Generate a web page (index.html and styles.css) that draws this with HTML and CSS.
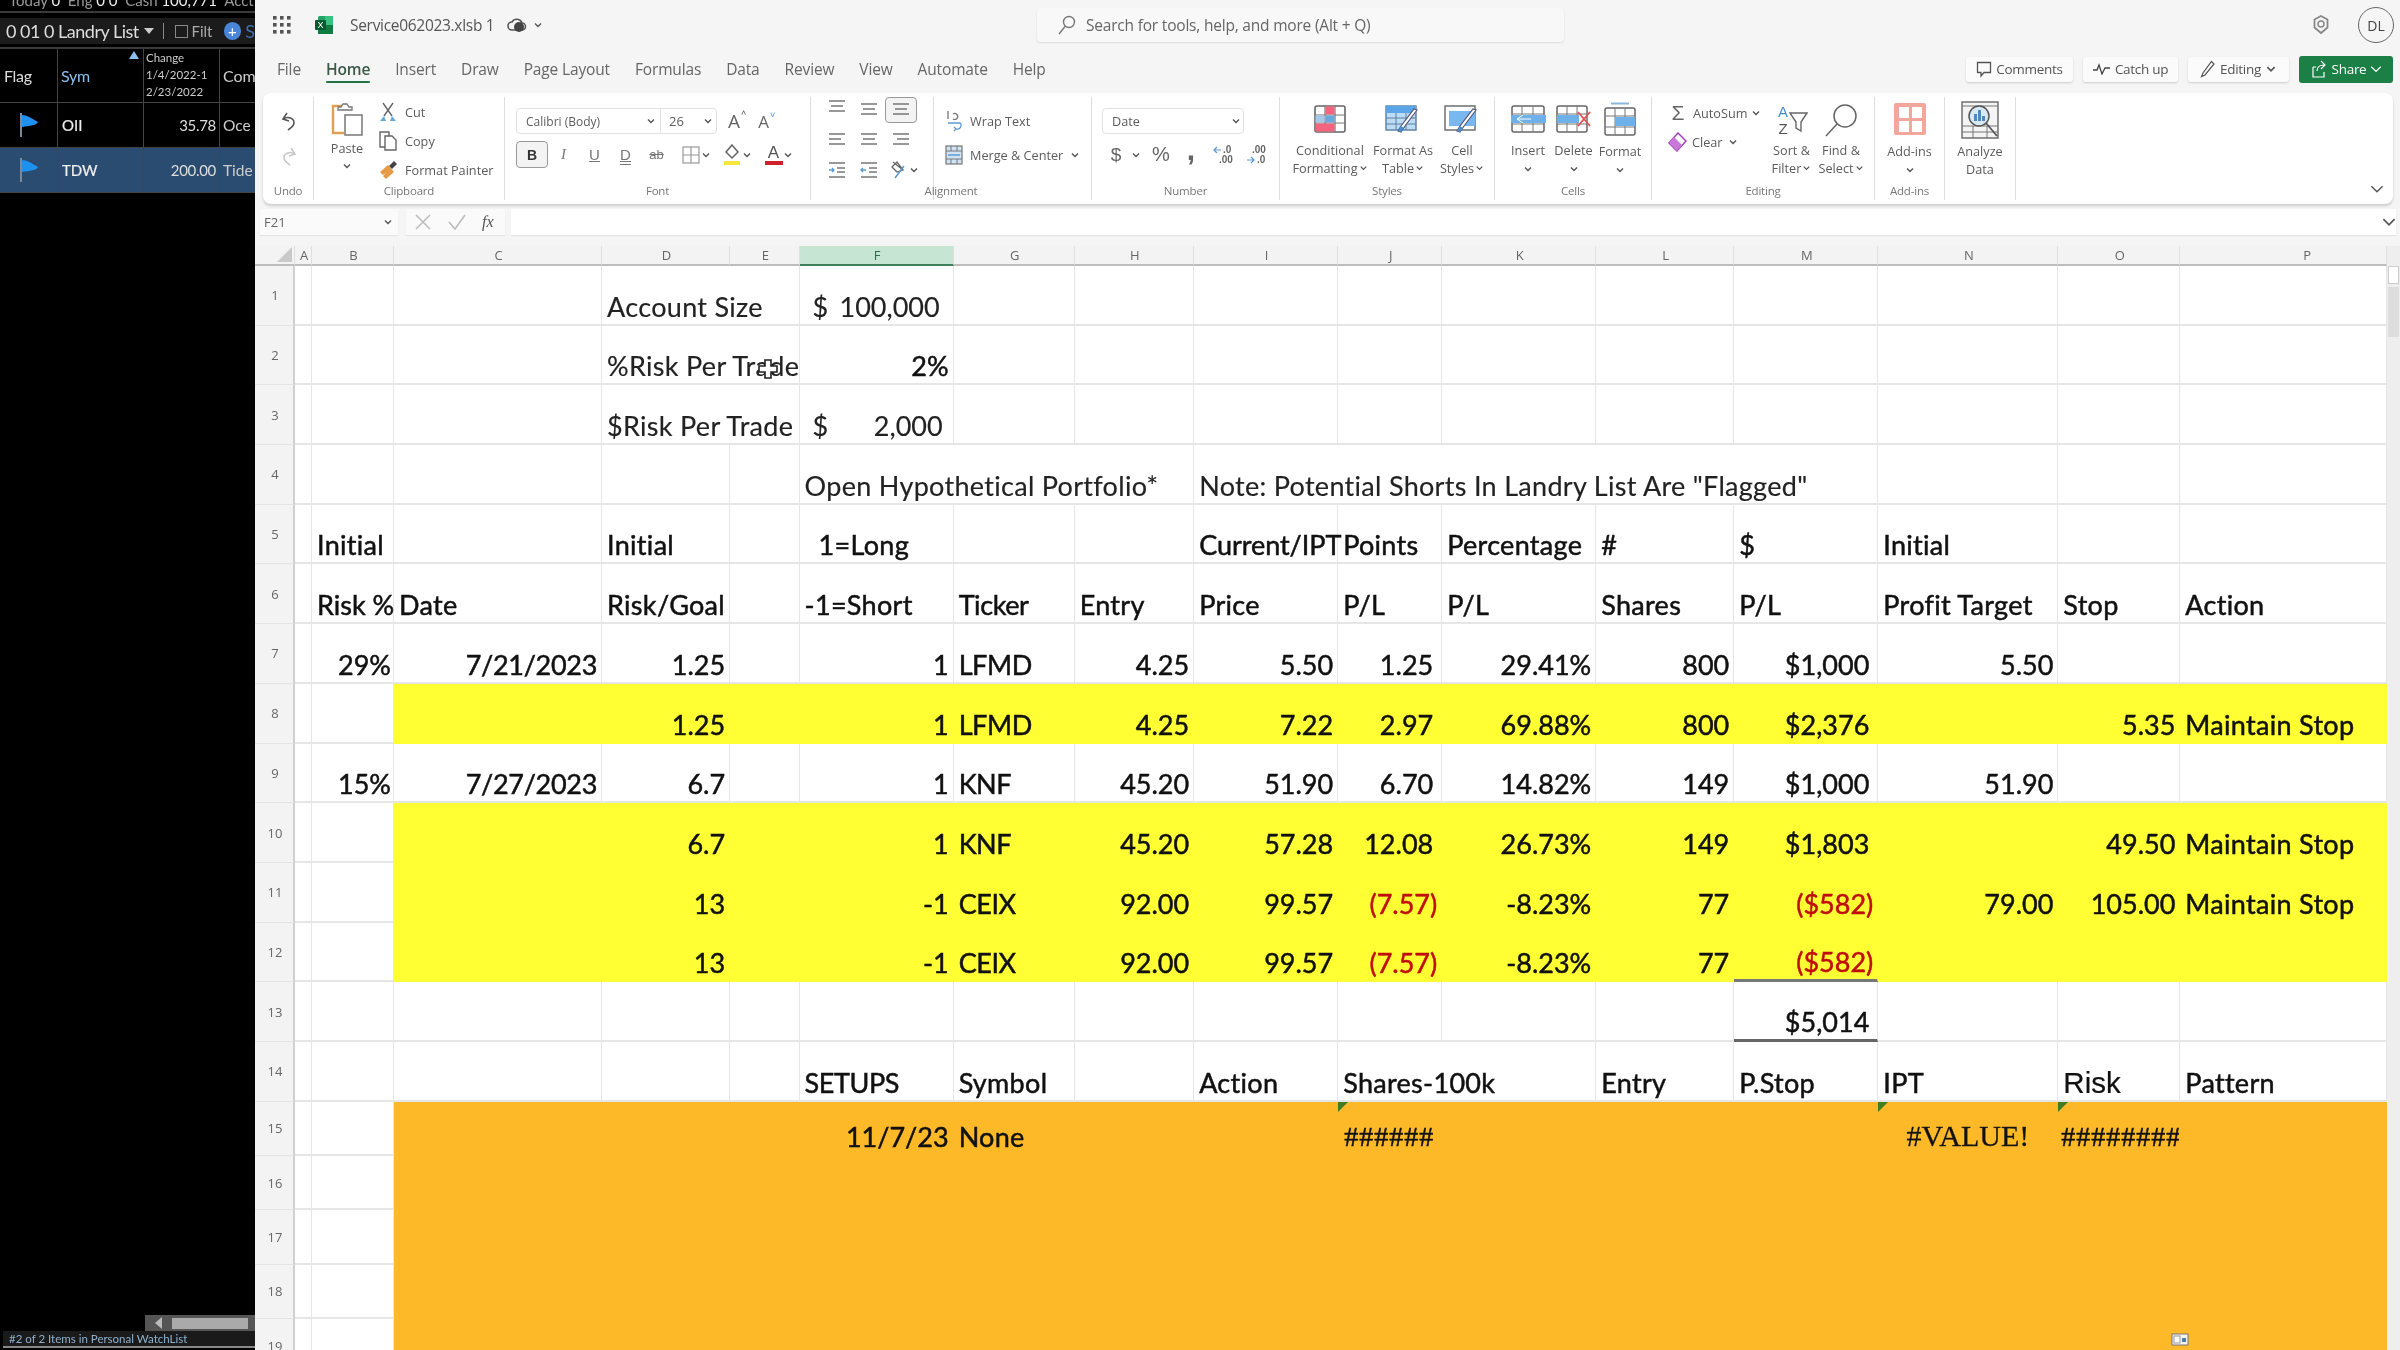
FILE: index.html
```html
<!DOCTYPE html>
<html lang="en">
<head>
<meta charset="utf-8">
<title>Service062023.xlsb</title>
<link rel="stylesheet" href="styles.css">
</head>
<body>
<svg class="defs" width="0" height="0">
  <symbol id="tbl" viewBox="0 0 32 28"><rect x="1" y="1" width="30" height="26" rx="2" fill="#fff" stroke="#666" stroke-width="1.6"/><path d="M1 10h30M1 18h30M11 1v26M21 1v26" stroke="#777" stroke-width="1.2" fill="none"/></symbol>
  <symbol id="chev" viewBox="0 0 10 10"><path d="M2 3.5 5 6.5 8 3.5" fill="none" stroke="#555" stroke-width="1.4"/></symbol>
  <symbol id="lines-l" viewBox="0 0 20 20"><path d="M2 4h16M2 9h12M2 14h16" stroke="#777" stroke-width="1.6"/></symbol>
  <symbol id="lines-c" viewBox="0 0 20 20"><path d="M2 4h16M4 9h12M2 14h16" stroke="#777" stroke-width="1.6"/></symbol>
  <symbol id="lines-r" viewBox="0 0 20 20"><path d="M2 4h16M6 9h12M2 14h16" stroke="#777" stroke-width="1.6"/></symbol>
</svg>
<div class="app">
  <aside class="watch">
    <div class="watch-strip"><span class="ws-in">Today <b>0</b> &nbsp;Eng <b>0 0</b> &nbsp;Cash <b>100,771</b> &nbsp;Acct</span></div>
    <div class="watch-tools">
      <span class="wt-name">0 01 0 Landry List</span><span class="wt-caret"></span><span class="wt-sep"></span><span class="wt-box"></span><span class="wt-filt">Filt</span><span class="wt-plus">+</span><span class="wt-s">S</span>
    </div>
    <div class="watch-grid wg-head">
      <div class="wc wc-flag">Flag</div>
      <div class="wc wc-sym">Sym<span class="wc-sort"></span></div>
      <div class="wc wc-chg">Change<br>1/4/2022-1<br>2/23/2022</div>
      <div class="wc wc-com">Com</div>
    </div>
    <div class="watch-grid wg-row">
      <div class="wc wc-ic"><svg width="20" height="26" viewBox="0 0 20 26"><path d="M2 1v24" stroke="#7a8a99" stroke-width="2"/><path d="M3 3c5 0 9 3 16 7-1 3-8 4-16 5z" fill="#1e90f0"/></svg></div>
      <div class="wc wc-t">OII</div><div class="wc wc-n">35.78</div><div class="wc wc-c">Oce</div>
    </div>
    <div class="watch-grid wg-row wg-sel">
      <div class="wc wc-ic"><svg width="20" height="26" viewBox="0 0 20 26"><path d="M2 1v24" stroke="#7a8a99" stroke-width="2"/><path d="M3 3c5 0 9 3 16 7-1 3-8 4-16 5z" fill="#1e90f0"/></svg></div>
      <div class="wc wc-t">TDW</div><div class="wc wc-n">200.00</div><div class="wc wc-c">Tide</div>
    </div>
    <div class="watch-fill"></div>
    <div class="watch-scroll"><span class="ws-arrow"></span><span class="ws-thumb"></span></div>
    <div class="watch-status">#2 of 2 Items in Personal WatchList</div>
    <div class="watch-end"></div>
  </aside>

  <main class="excel">
    <header class="titlebar">
      <svg class="waffle" width="18" height="18" viewBox="0 0 18 18" fill="#555"><rect x="0" y="0" width="3.6" height="3.6"/><rect x="7" y="0" width="3.6" height="3.6"/><rect x="14" y="0" width="3.6" height="3.6"/><rect x="0" y="7" width="3.6" height="3.6"/><rect x="7" y="7" width="3.6" height="3.6"/><rect x="14" y="7" width="3.6" height="3.6"/><rect x="0" y="14" width="3.6" height="3.6"/><rect x="7" y="14" width="3.6" height="3.6"/><rect x="14" y="14" width="3.6" height="3.6"/></svg>
      <svg class="xl" width="20" height="20" viewBox="0 0 20 20"><rect x="4" y="1" width="15" height="18" rx="1.5" fill="#21a366"/><rect x="4" y="10" width="15" height="9" fill="#107c41"/><rect x="11" y="1" width="8" height="9" fill="#33c481"/><rect x="1" y="5" width="11" height="10" rx="1" fill="#0b5a2f"/><text x="6.5" y="13" font-size="9" text-anchor="middle" fill="#fff" font-family="Liberation Sans">X</text></svg>
      <span class="doc">Service062023.xlsb 1</span>
      <svg class="cloud" width="20" height="18" viewBox="0 0 20 18"><path d="M5 14a4 4 0 0 1 0-8 5.500 5.500 0 0 1 10 1 3.500 3.500 0 0 1 0 7z" fill="none" stroke="#555" stroke-width="1.6"/><circle cx="12" cy="11" r="5" fill="#444"/></svg>
      <svg class="chev-doc" width="10" height="10"><use href="#chev"/></svg>
      <div class="search">
        <svg width="22" height="22" viewBox="0 0 22 22"><circle cx="13" cy="8" r="5.500" fill="none" stroke="#777" stroke-width="1.400"/><path d="M9 12.500 3 20" stroke="#777" stroke-width="1.400"/></svg>
        <span>Search for tools, help, and more (Alt + Q)</span>
      </div>
      <svg class="gear" width="20" height="22" viewBox="0 0 20 22"><path d="M10 2 16.500 5.500v8L10 19l-6.500-5.500v-8z" fill="none" stroke="#888" stroke-width="1.800"/><circle cx="10" cy="10" r="3" fill="none" stroke="#888" stroke-width="1.500"/></svg>
      <span class="avatar">DL</span>
    </header>

    <nav class="tabs">
      <span class="tab">File</span><span class="tab tab-on">Home</span><span class="tab">Insert</span><span class="tab">Draw</span><span class="tab">Page Layout</span><span class="tab">Formulas</span><span class="tab">Data</span><span class="tab">Review</span><span class="tab">View</span><span class="tab">Automate</span><span class="tab">Help</span>
      <div class="actions">
        <span class="act act-c"><svg width="16" height="17" viewBox="0 0 16 17"><path d="M1.500 1.500h13v10H8l-3 3.500v-3.500H1.500z" fill="none" stroke="#555" stroke-width="1.300"/></svg>Comments</span>
        <span class="act act-u"><svg width="18" height="12" viewBox="0 0 18 12"><path d="M0 7h4l2-5 3 9 3-6h5" fill="none" stroke="#444" stroke-width="1.300"/></svg>Catch up</span>
        <span class="act act-e"><svg width="16" height="18" viewBox="0 0 16 18"><path d="M11.500 1.500 14 4 5 15l-3.500 1.500L3 13z" fill="none" stroke="#555" stroke-width="1.200"/></svg>Editing<svg width="12" height="12"><use href="#chev"/></svg></span>
        <span class="act act-s"><svg width="18" height="20" viewBox="0 0 18 20"><path d="M3 8v10h11v-5M3 8h3M7 12c0-4 3-6 7-6M11 2l4 4-4 4" fill="none" stroke="#fff" stroke-width="1.200"/></svg>Share<svg class="w" width="12" height="12" viewBox="0 0 10 10"><path d="M1 3 5 7 9 3" fill="none" stroke="#fff" stroke-width="1.100"/></svg></span>
      </div>
    </nav>

    <section class="ribbon">
      <div class="grp g-undo">
        <div class="grp-body col-center">
          <svg class="undo" width="24" height="24" viewBox="0 0 24 24"><path d="M10 4 6 10l6 2M6 10c5-3 11-1 11 4 0 3-3 5-6 7" fill="none" stroke="#555" stroke-width="1.600"/></svg>
          <svg class="redo" width="24" height="24" viewBox="0 0 24 24"><path d="M14 4l4 6-6 2M18 10c-5-3-11-1-11 4 0 3 3 5 6 7" fill="none" stroke="#c8c8c8" stroke-width="1.600"/></svg>
        </div>
        <div class="grp-label">Undo</div>
      </div>

      <div class="grp g-clip">
        <div class="grp-body row">
          <div class="paste">
            <svg width="32" height="34" viewBox="0 0 32 34"><path d="M13 4H2v27h11" fill="none" stroke="#e0a050" stroke-width="2.400"/><path d="M7 8V5h3l2-3h4l2 3h3v3z" fill="#fff" stroke="#777" stroke-width="1.300"/><rect x="14" y="13" width="17" height="20" fill="#fff" stroke="#777" stroke-width="1.500"/></svg>
            <span class="pl">Paste</span>
            <svg class="pc" width="10" height="10"><use href="#chev"/></svg>
          </div>
          <div class="clip-list">
            <div class="clip-row"><svg width="20" height="22" viewBox="0 0 20 22"><path d="M5 2l9 13M15 2 6 15" stroke="#666" stroke-width="1.400" fill="none"/><path d="M2 20l4-5 2 5zM18 20l-4-5-2 5z" fill="#6aa8d8"/></svg><span>Cut</span></div>
            <div class="clip-row"><svg width="20" height="22" viewBox="0 0 20 22"><path d="M2 2h9v15H2z" fill="none" stroke="#666" stroke-width="1.400"/><path d="M7 6h7l4 4v10H7z" fill="#fff" stroke="#666" stroke-width="1.400"/></svg><span>Copy</span></div>
            <div class="clip-row"><svg width="20" height="22" viewBox="0 0 20 22"><path d="M2 13l8-7 6 7-8 7-3-3 3-3-3 2z" fill="#e59a45"/><path d="M11 7l5-5 3 3-5 5z" fill="#444"/></svg><span>Format Painter</span></div>
          </div>
        </div>
        <div class="grp-label">Clipboard</div>
      </div>

      <div class="grp g-font">
        <div class="grp-body col">
          <div class="font-row1">
            <div class="combo"><span class="c-name">Calibri (Body)<svg width="10" height="10"><use href="#chev"/></svg></span><span class="c-size">26<svg width="10" height="10"><use href="#chev"/></svg></span></div>
            <span class="grow">A<sup>˄</sup></span><span class="shrink">A<sup>˅</sup></span>
          </div>
          <div class="font-row2">
            <span class="fb fb-on">B</span><span class="fb fi">I</span><span class="fb fu">U</span><span class="fb fu fd">D</span><span class="fb fs">ab</span>
            <span class="fb fbd"><svg width="20" height="20" viewBox="0 0 20 20"><rect x="2" y="2" width="16" height="16" fill="none" stroke="#999" stroke-width="1.200"/><path d="M2 10h16M10 2v16" stroke="#999" stroke-width="1.200"/></svg><svg width="10" height="10"><use href="#chev"/></svg></span>
            <span class="fb ffill"><svg width="20" height="24" viewBox="0 0 20 24"><path d="M10 2l6 7-6 6-6-6z" fill="none" stroke="#666" stroke-width="1.500"/><rect x="2" y="18" width="16" height="4" fill="#f4e83c"/></svg><svg width="10" height="10"><use href="#chev"/></svg></span>
            <span class="fb fcol"><span class="fa">A</span><svg width="10" height="10"><use href="#chev"/></svg></span>
          </div>
        </div>
        <div class="grp-label">Font</div>
      </div>

      <div class="grp g-align">
        <div class="grp-body row">
          <div class="al-grid">
            <span class="al al-t"><svg width="20" height="20"><use href="#lines-c"/></svg></span>
            <span class="al"><svg width="20" height="20"><use href="#lines-c"/></svg></span>
            <span class="al al-on"><svg width="20" height="20"><use href="#lines-c"/></svg></span>
            <span class="al"><svg width="20" height="20"><use href="#lines-l"/></svg></span>
            <span class="al"><svg width="20" height="20"><use href="#lines-c"/></svg></span>
            <span class="al"><svg width="20" height="20"><use href="#lines-r"/></svg></span>
            <span class="al"><svg width="20" height="20" viewBox="0 0 20 20"><path d="M2 3h16M10 8h8M10 12h8M2 17h16" stroke="#777" stroke-width="1.500"/><path d="M2 10h5M5 8l2 2-2 2" stroke="#5a9ad5" fill="none" stroke-width="1.300"/></svg></span>
            <span class="al"><svg width="20" height="20" viewBox="0 0 20 20"><path d="M2 3h16M10 8h8M10 12h8M2 17h16" stroke="#777" stroke-width="1.500"/><path d="M7 10H2M4 8l-2 2 2 2" stroke="#5a9ad5" fill="none" stroke-width="1.300"/></svg></span>
            <span class="al al-orient"><svg width="20" height="22" viewBox="0 0 20 22"><path d="M4 3l10 8M3 8l5-5 6 8-6 2z" fill="none" stroke="#666" stroke-width="1.300"/><path d="M15 7 6 19" stroke="#5a9ad5" stroke-width="1.500"/></svg><svg width="10" height="10"><use href="#chev"/></svg></span>
          </div>
          <div class="merge-col">
            <div class="m-row"><svg width="18" height="24" viewBox="0 0 18 24"><path d="M3 2v8M8 5a3 3 0 1 1 0 5" fill="none" stroke="#777" stroke-width="1.300"/><path d="M3 14h11c4 0 2 7-3 6M9 18l2 2-2 2" fill="none" stroke="#5a9ad5" stroke-width="1.300"/></svg><span>Wrap Text</span></div>
            <div class="m-row"><svg width="18" height="20" viewBox="0 0 18 20"><rect x="1" y="1" width="16" height="18" fill="#cfe3f5" stroke="#777" stroke-width="1.200"/><path d="M1 6h16M1 14h16M6 1v5M12 1v5M6 14v5M12 14v5" stroke="#777"/><path d="M3 10h12" stroke="#4a90d0" stroke-width="1.300"/></svg><span>Merge &amp; Center</span><svg width="10" height="10"><use href="#chev"/></svg></div>
          </div>
        </div>
        <div class="grp-label">Alignment</div>
      </div>

      <div class="grp g-num">
        <div class="grp-body col">
          <div class="num-sel"><span>Date</span><svg width="10" height="10"><use href="#chev"/></svg></div>
          <div class="num-row">
            <span class="nb nb-d">$</span><svg class="nb-c" width="10" height="10"><use href="#chev"/></svg>
            <span class="nb nb-p">%</span><span class="nb nb-cm">,</span>
            <span class="nb nb-s"><svg width="24" height="24" viewBox="0 0 24 24"><path d="M9 7H2M5 4 2 7l3 3" fill="none" stroke="#5a9ad5" stroke-width="1.200"/><text x="11" y="10" font-size="10" font-weight="700" fill="#666" font-family="Liberation Sans">.0</text><text x="7" y="20" font-size="10" font-weight="700" fill="#666" font-family="Liberation Sans">.00</text></svg></span>
            <span class="nb nb-s"><svg width="24" height="24" viewBox="0 0 24 24"><text x="7" y="10" font-size="10" font-weight="700" fill="#666" font-family="Liberation Sans">.00</text><path d="M2 17h7M6 14l3 3-3 3" fill="none" stroke="#5a9ad5" stroke-width="1.200"/><text x="12" y="20" font-size="10" font-weight="700" fill="#666" font-family="Liberation Sans">.0</text></svg></span>
          </div>
        </div>
        <div class="grp-label">Number</div>
      </div>

      <div class="grp g-styles">
        <div class="grp-body row">
          <div class="big b-cond">
            <svg class="ico" width="32" height="28" viewBox="0 0 32 28"><use href="#tbl"/><rect x="11.500" y="1.500" width="9" height="8" fill="#f4647e"/><rect x="1.500" y="10.500" width="9" height="7" fill="#a8c8e8"/><rect x="11.500" y="10.500" width="9" height="7" fill="#6aa8e0"/><rect x="1.500" y="18.500" width="19" height="8" fill="#f4647e"/></svg>
            <span>Conditional</span><span>Formatting<svg width="9" height="10"><use href="#chev"/></svg></span>
          </div>
          <div class="big b-fmt">
            <svg class="ico" width="36" height="30" viewBox="0 0 36 30"><rect x="1" y="2" width="30" height="24" fill="#bcdcf5" stroke="#5a7fa0" stroke-width="1.400"/><rect x="1" y="2" width="30" height="7" fill="#5aa5e8"/><path d="M1 14h30M1 20h30M11 9v17M21 9v17" stroke="#5a7fa0"/><path d="M32 6 20 22l-4 6-3-1 3-5L29 5z" fill="#fff" stroke="#557" stroke-width="1.200"/><path d="M16 22l-3 5 3 1 3-4z" fill="#4a90d0"/></svg>
            <span>Format As</span><span>Table<svg width="9" height="10"><use href="#chev"/></svg></span>
          </div>
          <div class="big b-cell">
            <svg class="ico" width="36" height="30" viewBox="0 0 36 30"><rect x="1" y="2" width="30" height="24" fill="#fff" stroke="#666" stroke-width="1.400"/><rect x="5" y="7" width="26" height="15" fill="#78b8ee"/><path d="M32 6 20 22l-4 6-3-1 3-5L29 5z" fill="#fff" stroke="#557" stroke-width="1.200"/><path d="M16 22l-3 5 3 1 3-4z" fill="#4a90d0"/></svg>
            <span>Cell</span><span>Styles<svg width="9" height="10"><use href="#chev"/></svg></span>
          </div>
        </div>
        <div class="grp-label">Styles</div>
      </div>

      <div class="grp g-cells">
        <div class="grp-body row">
          <div class="big b-ins">
            <svg class="ico" width="38" height="28" viewBox="0 0 38 28"><rect x="3" y="1" width="32" height="26" rx="2" fill="#fff" stroke="#666" stroke-width="1.500"/><path d="M3 9h32M3 19h32M13 1v26M24 1v26" stroke="#777"/><rect x="2" y="10" width="35" height="8" fill="#6eb0ea"/><path d="M14 10 8 14l6 4M8 14h14" stroke="#fff" fill="none"/></svg>
            <span>Insert</span><svg class="dn" width="10" height="10"><use href="#chev"/></svg>
          </div>
          <div class="big b-del">
            <svg class="ico" width="36" height="28" viewBox="0 0 36 28"><rect x="1" y="1" width="30" height="26" rx="2" fill="#fff" stroke="#666" stroke-width="1.500"/><path d="M1 9h30M1 19h30M11 1v26M21 1v26" stroke="#777"/><rect x="1" y="10" width="22" height="8" fill="#6eb0ea"/><path d="M22 7 34 21M34 7 22 21" stroke="#e0524f" stroke-width="1.800"/></svg>
            <span>Delete</span><svg class="dn" width="10" height="10"><use href="#chev"/></svg>
          </div>
          <div class="big b-cfmt">
            <svg class="ico up" width="32" height="34" viewBox="0 0 32 34"><path d="M7 1.500h18" stroke="#8ab8e0" stroke-width="2"/><rect x="1" y="6" width="30" height="27" rx="2" fill="#fff" stroke="#666" stroke-width="1.500"/><path d="M1 14h30M1 25h30M11 6v27M21 6v27" stroke="#777"/><rect x="11" y="15" width="20" height="9" fill="#6eb0ea"/></svg>
            <span>Format</span><svg class="dn" width="10" height="10"><use href="#chev"/></svg>
          </div>
        </div>
        <div class="grp-label">Cells</div>
      </div>

      <div class="grp g-edit">
        <div class="grp-body row">
          <div class="ed-list">
            <div class="ed-row ed-sum"><span class="sig">Σ</span><span>AutoSum</span><svg width="10" height="10"><use href="#chev"/></svg></div>
            <div class="ed-row ed-clear"><svg width="20" height="20" viewBox="0 0 20 20"><path d="M11 1l8 8-9 10-8-8z" fill="#fff" stroke="#a040b8" stroke-width="1.500"/><path d="M2 11l5-6 8 8-5 6z" fill="#c878d8"/></svg><span>Clear</span><svg width="10" height="10"><use href="#chev"/></svg></div>
          </div>
          <div class="big b-sort">
            <svg class="ico" width="32" height="34" viewBox="0 0 32 34"><text x="7" y="14" font-size="15" text-anchor="middle" fill="#4a90d0" font-family="Liberation Sans">A</text><text x="7" y="31" font-size="15" text-anchor="middle" fill="#555" font-family="Liberation Sans">Z</text><path d="M14 10h17l-6 9v9l-5-3v-6z" fill="none" stroke="#666" stroke-width="1.400"/></svg>
            <span>Sort &amp;</span><span>Filter<svg width="9" height="10"><use href="#chev"/></svg></span>
          </div>
          <div class="big b-find">
            <svg class="ico" width="34" height="34" viewBox="0 0 34 34"><circle cx="21" cy="13" r="11" fill="none" stroke="#666" stroke-width="1.500"/><path d="M13 21 2 33" stroke="#666" stroke-width="1.500"/></svg>
            <span>Find &amp;</span><span>Select<svg width="9" height="10"><use href="#chev"/></svg></span>
          </div>
        </div>
        <div class="grp-label">Editing</div>
      </div>

      <div class="grp g-add">
        <div class="grp-body row">
          <div class="big b-add">
            <svg class="ico up" width="34" height="34" viewBox="0 0 34 34"><rect x="1" y="1" width="32" height="32" rx="2" fill="#f2a69c"/><rect x="6" y="5" width="10" height="11" fill="#fff"/><rect x="19" y="5" width="10" height="11" fill="#fff"/><rect x="6" y="19" width="10" height="11" fill="#fff"/><rect x="19" y="19" width="10" height="11" fill="#fff"/></svg>
            <span>Add-ins</span><svg class="dn" width="10" height="10"><use href="#chev"/></svg>
          </div>
        </div>
        <div class="grp-label">Add-ins</div>
      </div>

      <div class="grp g-ana">
        <div class="grp-body row">
          <div class="big b-ana">
            <svg class="ico up2" width="38" height="38" viewBox="0 0 38 38"><rect x="1" y="1" width="36" height="36" fill="#f4f4f4" stroke="#666" stroke-width="1.400"/><path d="M1 5h36M1 25h36M1 31h36M12 25v12M26 25v12" stroke="#777"/><circle cx="18" cy="15" r="10" fill="#d8e8f5" stroke="#555" stroke-width="1.500"/><path d="M13 20v-7h3v7zM17 20V9h3v11zM21 20v-5h3v5z" fill="#4a8ac0"/><path d="M25 22l11 13" stroke="#555" stroke-width="1.800"/></svg>
            <span>Analyze</span><span>Data</span>
          </div>
        </div>
        <div class="grp-label"></div>
      </div>

      <svg class="rib-more" width="14" height="14" viewBox="0 0 10 10"><path d="M1 3 5 7 9 3" fill="none" stroke="#555" stroke-width="1"/></svg>
    </section>

    <section class="formula">
      <div class="namebox"><span>F21</span><svg width="10" height="10"><use href="#chev"/></svg></div>
      <div class="fxbox">
        <svg width="18" height="18" viewBox="0 0 18 18"><path d="M2 2l14 14M16 2 2 16" stroke="#bbb" stroke-width="1.500"/></svg>
        <svg width="20" height="18" viewBox="0 0 20 18"><path d="M2 9l6 7L18 2" stroke="#bbb" stroke-width="1.500" fill="none"/></svg>
        <i>fx</i>
      </div>
      <div class="fxinput"><svg width="14" height="14" viewBox="0 0 10 10"><path d="M1 3 5 7 9 3" fill="none" stroke="#555" stroke-width="1.200"/></svg></div>
    </section>

    <section class="sheet">
      <table class="grid">
        <colgroup><col class="c-rh"><col class="c-a"><col class="c-b"><col class="c-c"><col class="c-d"><col class="c-e"><col class="c-f"><col class="c-g"><col class="c-h"><col class="c-i"><col class="c-j"><col class="c-k"><col class="c-l"><col class="c-m"><col class="c-n"><col class="c-o"><col class="c-p"></colgroup>
        <thead><tr><th class="corner"><span></span></th><th>A</th><th>B</th><th>C</th><th>D</th><th>E</th><th class="sel">F</th><th>G</th><th>H</th><th>I</th><th>J</th><th>K</th><th>L</th><th>M</th><th>N</th><th>O</th><th class="ph">P</th></tr></thead>
        <tbody>
          <tr class="r-a"><th>1</th><td></td><td></td><td></td><td class="t" colspan="2">Account Size</td><td class="acct"><div><span>$</span><span>100,000</span></div></td><td></td><td></td><td></td><td></td><td></td><td></td><td></td><td></td><td></td><td></td></tr>
          <tr class="r-a"><th>2</th><td></td><td></td><td></td><td class="t" colspan="2">%Risk Per Trade</td><td class="n">2%</td><td></td><td></td><td></td><td></td><td></td><td></td><td></td><td></td><td></td><td></td></tr>
          <tr class="r-a"><th>3</th><td></td><td></td><td></td><td class="t" colspan="2">$Risk Per Trade</td><td class="acct a2"><div><span>$</span><span>2,000</span></div></td><td></td><td></td><td></td><td></td><td></td><td></td><td></td><td></td><td></td><td></td></tr>
          <tr class="r-a"><th>4</th><td></td><td></td><td></td><td></td><td></td><td class="t" colspan="3">Open Hypothetical Portfolio*</td><td class="t" colspan="5">Note: Potential Shorts In Landry List Are "Flagged"</td><td></td><td></td><td></td></tr>
          <tr class="r-a"><th>5</th><td></td><td class="k">Initial</td><td></td><td class="k">Initial</td><td></td><td class="k ind">1=Long</td><td></td><td></td><td class="k nar2">Current/IPT</td><td class="k">Points</td><td class="k">Percentage</td><td class="k">#</td><td class="k">$</td><td class="k">Initial</td><td></td><td></td></tr>
          <tr class="r-a"><th>6</th><td></td><td class="k nar">Risk %</td><td class="k">Date</td><td class="k">Risk/Goal</td><td></td><td class="k">-1=Short</td><td class="k cap">Ticker</td><td class="k">Entry</td><td class="k">Price</td><td class="k">P/L</td><td class="k">P/L</td><td class="k">Shares</td><td class="k">P/L</td><td class="k">Profit Target</td><td class="k">Stop</td><td class="k">Action</td></tr>
          <tr class="r-a"><th>7</th><td></td><td class="n nb2">29%</td><td class="n dt">7/21/2023</td><td class="n">1.25</td><td></td><td class="n">1</td><td class="k cap">LFMD</td><td class="n">4.25</td><td class="n">5.50</td><td class="n m">1.25</td><td class="n">29.41%</td><td class="n">800</td><td class="n m">$1,000</td><td class="n">5.50</td><td></td><td></td></tr>
          <tr class="r-a hl"><th>8</th><td></td><td></td><td></td><td class="n">1.25</td><td></td><td class="n">1</td><td class="k cap">LFMD</td><td class="n">4.25</td><td class="n">7.22</td><td class="n m">2.97</td><td class="n">69.88%</td><td class="n">800</td><td class="n m">$2,376</td><td></td><td class="n">5.35</td><td class="k">Maintain Stop</td></tr>
          <tr class="r-a"><th>9</th><td></td><td class="n nb2">15%</td><td class="n dt">7/27/2023</td><td class="n">6.7</td><td></td><td class="n">1</td><td class="k cap">KNF</td><td class="n">45.20</td><td class="n">51.90</td><td class="n m">6.70</td><td class="n">14.82%</td><td class="n">149</td><td class="n m">$1,000</td><td class="n">51.90</td><td></td><td></td></tr>
          <tr class="r-a hl"><th>10</th><td></td><td></td><td></td><td class="n">6.7</td><td></td><td class="n">1</td><td class="k cap">KNF</td><td class="n">45.20</td><td class="n">57.28</td><td class="n m">12.08</td><td class="n">26.73%</td><td class="n">149</td><td class="n m">$1,803</td><td></td><td class="n">49.50</td><td class="k">Maintain Stop</td></tr>
          <tr class="r-a hl"><th>11</th><td></td><td></td><td></td><td class="n">13</td><td></td><td class="n">-1</td><td class="k cap">CEIX</td><td class="n">92.00</td><td class="n">99.57</td><td class="n red">(7.57)</td><td class="n">-8.23%</td><td class="n">77</td><td class="n red">($582)</td><td class="n">79.00</td><td class="n">105.00</td><td class="k">Maintain Stop</td></tr>
          <tr class="r-a hl"><th>12</th><td></td><td></td><td></td><td class="n">13</td><td></td><td class="n">-1</td><td class="k cap">CEIX</td><td class="n">92.00</td><td class="n">99.57</td><td class="n red">(7.57)</td><td class="n">-8.23%</td><td class="n">77</td><td class="n red tot-a">($582)</td><td></td><td></td><td></td></tr>
          <tr class="r-a"><th>13</th><td></td><td></td><td></td><td></td><td></td><td></td><td></td><td></td><td></td><td></td><td></td><td></td><td class="n m tot-b">$5,014</td><td></td><td></td><td></td></tr>
          <tr class="r-a"><th>14</th><td></td><td></td><td></td><td></td><td></td><td class="k cap">SETUPS</td><td class="k">Symbol</td><td></td><td class="k">Action</td><td class="k" colspan="2">Shares-100k</td><td class="k">Entry</td><td class="k">P.Stop</td><td class="k">IPT</td><td class="k risk">Risk</td><td class="k">Pattern</td></tr>
          <tr class="r-b or"><th>15</th><td></td><td></td><td></td><td></td><td></td><td class="n">11/7/23</td><td class="k">None</td><td></td><td></td><td class="hash tri">######</td><td></td><td></td><td></td><td class="err tri">#VALUE!</td><td class="hash h2 tri">########</td><td></td></tr>
          <tr class="r-b or"><th>16</th><td></td><td></td><td></td><td></td><td></td><td></td><td></td><td></td><td></td><td></td><td></td><td></td><td></td><td></td><td></td><td></td></tr>
          <tr class="r-b or"><th>17</th><td></td><td></td><td></td><td></td><td></td><td></td><td></td><td></td><td></td><td></td><td></td><td></td><td></td><td></td><td></td><td></td></tr>
          <tr class="r-b or"><th>18</th><td></td><td></td><td></td><td></td><td></td><td></td><td></td><td></td><td></td><td></td><td></td><td></td><td></td><td></td><td></td><td></td></tr>
          <tr class="r-b or"><th>19</th><td></td><td></td><td></td><td></td><td></td><td></td><td></td><td></td><td></td><td></td><td></td><td></td><td></td><td></td><td></td><td></td></tr>
        </tbody>
      </table>
      <div class="vscroll"><span class="vs-btn"></span><span class="vs-thumb"></span></div>
      <svg class="cursor" width="20" height="20" viewBox="0 0 20 20"><path d="M7 1h6v6h6v6h-6v6H7v-6H1V7h6z" fill="#fff" stroke="#222" stroke-width="1.600"/></svg>
      <svg class="paste-tag" width="18" height="13" viewBox="0 0 18 13"><rect x="1" y="1" width="16" height="11" fill="#f4f4f4" stroke="#777"/><rect x="3" y="3" width="6" height="7" fill="#fff" stroke="#999"/><rect x="11" y="5" width="4" height="4" fill="#4a80b0"/></svg>
    </section>
  </main>
</div>
</body>
</html>
```
FILE: styles.css
```css
* { box-sizing: border-box; }
html, body { margin: 0; padding: 0; }
body { width: 2400px; height: 1350px; overflow: hidden; background: #000; font-family: "Open Sans", "Liberation Sans", sans-serif; }
.defs { display: block; height: 0; }
svg { display: block; flex: none; }
.app { display: flex; width: 2400px; height: 1350px; filter: blur(.55px); }

/* left watch list */
.watch { width: 255px; flex: none; height: 1350px; background: #000; color: #ddd; display: flex; flex-direction: column; overflow: hidden; font-family: "Lato", sans-serif; }
.watch-strip { height: 13px; overflow: hidden; border-bottom: 2px solid #3a3a3a; }
.ws-in { display: block; margin-top: -9px; padding-left: 9px; font-size: 15px; line-height: 18px; color: #999; white-space: nowrap; }
.ws-in b { color: #eee; font-weight: 400; }
.watch-tools { height: 26px; margin-top: 5px; background: #1b1b1b; display: flex; align-items: center; padding-left: 6px; font-size: 18px; color: #ddd; white-space: nowrap; overflow: hidden; }
.wt-name { letter-spacing: -.5px; }
.wt-caret { width: 0; height: 0; margin-left: 5px; border: 5px solid transparent; border-top: 6px solid #ccc; border-bottom: 0; }
.wt-sep { width: 1px; height: 16px; background: #888; margin-left: 9px; }
.wt-box { width: 13px; height: 13px; border: 1px solid #888; margin-left: 11px; }
.wt-filt { margin-left: 4px; font-size: 15px; color: #aaa; }
.wt-plus { width: 18px; height: 18px; border-radius: 50%; background: #4a86d8; color: #fff; text-align: center; font-size: 15px; line-height: 18px; margin-left: 11px; }
.wt-s { margin-left: 4px; color: #3f6ea8; }
.watch-grid { display: grid; grid-template-columns: 58px 86px 76px 35px; border-bottom: 1px solid #444; }
.wg-head { height: 56px; margin-top: 3px; border-top: 2px solid #3a3a3a; }
.wg-row { height: 45px; }
.wg-sel { background: #2a4c70; }
.wc { border-right: 1px solid #444; display: flex; align-items: center; white-space: nowrap; overflow: hidden; font-size: 14px; padding-left: 3px; }
.wc-flag { color: #ddd; padding-left: 4px; font-size: 16px; letter-spacing: -.3px; }
.wc-sym { color: #8ac0ee; position: relative; font-size: 16px; letter-spacing: -.3px; }
.wc-sort { position: absolute; right: 4px; top: 2px; width: 0; height: 0; border: 5px solid transparent; border-bottom: 8px solid #8ac0ee; border-top: 0; }
.wc-chg { font-size: 11.500px; line-height: 17px; color: #ccc; padding-left: 2px; display: block; }
.wc-com { color: #ccc; border-right: 0; font-size: 16px; }
.wc-ic { justify-content: center; padding-left: 0; }
.wc-t { color: #eee; font-size: 15px; padding-left: 4px; -webkit-text-stroke: .2px #eee; }
.wc-n { justify-content: flex-end; padding-right: 3px; font-size: 15px; color: #ddd; letter-spacing: -.3px; }
.wc-c { border-right: 0; font-size: 15.500px; color: #ccc; }
.watch-fill { flex: 1; }
.watch-scroll { height: 16px; margin-left: 145px; background: #555; display: flex; align-items: center; padding-left: 10px; }
.ws-arrow { width: 0; height: 0; border: 6px solid transparent; border-right: 7px solid #bbb; border-left: 0; }
.ws-thumb { width: 76px; height: 11px; background: #aaa; margin-left: 10px; }
.watch-status { height: 15px; margin-left: 3px; background: #1a1a1a; color: #8fb0cc; font-size: 11.500px; line-height: 15px; padding-left: 6px; white-space: nowrap; }
.watch-end { height: 2px; margin: 0 0 2px 3px; background: #888; }

/* excel shell */
.excel { width: 2145px; flex: none; height: 1350px; background: #f5f5f5; display: flex; flex-direction: column; overflow: hidden; color: #555; }
.titlebar { height: 50px; display: flex; align-items: center; flex: none; }
.waffle { margin-left: 18px; }
.xl { margin-left: 23px; }
.doc { margin-left: 16px; width: 144px; font-size: 15.500px; letter-spacing: -.3px; color: #555; white-space: nowrap; }
.cloud { margin-left: 13px; }
.chev-doc { margin-left: 6px; }
.search { margin-left: 494px; width: 527px; height: 34px; background: #f8f8f8; box-shadow: 0 1px 2px #ddd; border-radius: 4px; display: flex; align-items: center; padding-left: 19px; color: #666; font-size: 15.500px; letter-spacing: -.2px; }
.search span { margin-left: 8px; white-space: nowrap; }
.gear { margin-left: 747px; }
.avatar { margin-left: 27px; width: 36px; height: 36px; border-radius: 50%; border: 1.500px solid #666; display: flex; align-items: center; justify-content: center; font-size: 14px; color: #444; }

.tabs { height: 43px; padding: 0 7px 5px 22px; display: flex; align-items: center; gap: 25px; flex: none; font-size: 15.500px; color: #666; white-space: nowrap; }
.tab { position: relative; letter-spacing: -.15px; }
.tab-on { color: #3a5a48; font-weight: 600; }
.tab-on::after { content: ""; position: absolute; left: 0; right: 0; bottom: -3px; height: 2.500px; background: #217346; border-radius: 1px; }
.actions { margin-left: auto; display: flex; gap: 10px; align-items: center; }
.act { height: 25px; background: #fbfbfb; box-shadow: 0 1px 2px #ccc; border-radius: 3px; display: flex; align-items: center; justify-content: center; gap: 4px; font-size: 13.500px; color: #555; letter-spacing: -.3px; }
.act-c { width: 107px; }
.act-u { width: 95px; }
.act-e { width: 101px; }
.act-s { width: 94px; height: 27px; background: #1c7f45; color: #fff; box-shadow: none; }

/* ribbon */
.ribbon { position: relative; margin-left: 8px; width: 2130px; height: 111px; flex: none; background: #fff; border-radius: 8px; box-shadow: 0 2px 3px #ccc; padding: 4px 0 4px; display: flex; font-size: 12.700px; color: #5c5c5c; white-space: nowrap; }
.grp { display: flex; flex-direction: column; border-right: 1.500px solid #dedede; height: 103px; flex: none; }
.grp-body { height: 85px; flex: none; }
.grp-label { height: 18px; text-align: center; font-size: 11.500px; line-height: 17px; color: #777; letter-spacing: -.2px; }
.row { display: flex; }
.col { display: flex; flex-direction: column; }
.col-center { display: flex; flex-direction: column; align-items: center; padding-left: 2px; }
.g-undo { width: 51px; }
.undo { margin-top: 12px; }
.redo { margin-top: 11px; }
.g-clip { width: 191px; }
.g-clip .grp-body { padding-left: 8px; }
.paste { width: 50px; display: flex; flex-direction: column; align-items: center; padding-top: 5px; }
.pl { margin-top: 4px; line-height: 16px; }
.pc { margin-top: 5px; }
.clip-list { margin-left: 6px; }
.clip-row { height: 29px; display: flex; align-items: center; gap: 7px; }
.g-font { width: 306px; }
.g-font .grp-body { padding-left: 11px; }
.font-row1 { display: flex; align-items: center; margin-top: 11px; height: 26px; }
.combo { width: 201px; height: 26px; border: 1.500px solid #e2e2e2; border-radius: 4px; display: flex; font-size: 12px; }
.c-name { width: 144px; border-right: 1px solid #e2e2e2; display: flex; align-items: center; justify-content: space-between; padding: 0 4px 0 9px; }
.c-size { flex: 1; display: flex; align-items: center; justify-content: space-between; padding: 0 3px 0 8px; font-size: 13px; }
.grow, .shrink { font-size: 19px; color: #666; display: flex; }
.grow { margin-left: 11px; }
.shrink { margin-left: 12px; font-size: 17px; }
.grow sup, .shrink sup { font-size: 9px; line-height: 10px; margin-left: 1px; }
.shrink sup { color: #4a90d0; }
.font-row2 { display: flex; align-items: center; margin-top: 7px; height: 27px; }
.fb { width: 31px; height: 27px; display: flex; align-items: center; justify-content: center; font-size: 15px; color: #777; font-family: "Liberation Sans", sans-serif; }
.fb-on { width: 32px; background: #f3f3f3; border: 1.500px solid #999; border-radius: 4px; color: #333; font-weight: 700; font-size: 14px; }
.fi { font-style: italic; font-family: "Liberation Serif", serif; }
.fu { text-decoration: underline; }
.fd { text-decoration-style: double; }
.fs { text-decoration: line-through; font-size: 13px; }
.fbd { width: 44px; padding-left: 4px; gap: 0; }
.ffill { width: 41px; }
.fcol { width: 43px; }
.fa { font-size: 17px; color: #555; border-bottom: 4px solid #d0202a; line-height: 17px; width: 18px; text-align: center; }
.g-align { width: 281px; }
.al-grid { width: 123px; height: 103px; margin-bottom: -18px; padding-left: 10px; border-right: 1.500px solid #dedede; display: grid; grid-template-columns: repeat(3, 32px); grid-template-rows: 26px 26px 26px; row-gap: 4px; align-content: start; margin-top: 0; }
.al { display: flex; align-items: center; justify-content: center; }
.al-t { align-items: flex-start; }
.al-on { background: #f3f3f3; border: 1.500px solid #999; border-radius: 4px; }
.al-orient { padding-left: 5px; }
.merge-col { padding: 11px 0 0 11px; }
.m-row { height: 26px; display: flex; align-items: center; gap: 7px; margin-bottom: 8px; }
.g-num { width: 188px; }
.g-num .grp-body { padding-left: 10px; }
.num-sel { margin-top: 11px; width: 142px; height: 26px; border: 1.500px solid #e2e2e2; border-radius: 4px; display: flex; align-items: center; justify-content: space-between; padding: 0 2px 0 9px; }
.num-row { margin-top: 7px; height: 27px; display: flex; align-items: center; }
.nb { display: flex; align-items: center; justify-content: center; width: 30px; height: 27px; color: #666; font-family: "Liberation Sans", sans-serif; }
.nb-d { width: 28px; font-size: 19px; }
.nb-c { margin: 0 2px 0 1px; }
.nb-p { font-size: 20px; margin-left: 3px; }
.nb-cm { font-size: 30px; font-weight: 700; line-height: 18px; align-items: flex-start; }
.nb-s { margin-left: 3px; }
.g-styles { width: 215px; }
.g-styles .grp-body { padding-left: 12px; }
.big { display: flex; flex-direction: column; align-items: center; line-height: 17.500px; }
.big > span { display: flex; align-items: center; gap: 1px; }
.ico { margin-top: 8px; margin-bottom: 9px; }
.b-fmt .ico, .b-cell .ico { margin-top: 7px; margin-bottom: 8px; }
.ico.up { margin-top: 5px; margin-bottom: 7px; }
.ico.up2 { margin-top: 4px; margin-bottom: 4px; }
.dn { margin-top: 4px; }
.b-cond { width: 76px; }
.b-fmt { width: 70px; }
.b-cell { width: 48px; }
.g-cells { width: 157px; }
.g-cells .grp-body { padding-left: 10px; }
.b-ins { width: 46px; }
.b-del { width: 45px; }
.b-cfmt { width: 48px; }
.g-edit { width: 223px; }
.g-edit .grp-body { padding-left: 15px; }
.ed-list { width: 101px; padding-top: 1px; }
.ed-row { display: flex; align-items: center; height: 29px; gap: 4px; }
.sig { width: 22px; text-align: center; font-size: 21px; font-family: "Liberation Sans", sans-serif; color: #666; }
.ed-clear { gap: 5px; }
.b-sort { width: 47px; }
.b-find { width: 52px; }
.b-sort .ico, .b-find .ico { margin-top: 6px; margin-bottom: 5px; }
.g-add { width: 70px; }
.b-add { width: 70px; }
.g-ana { width: 71px; }
.b-ana { width: 71px; }
.rib-more { position: absolute; right: 9px; bottom: 8px; }

/* formula bar */
.formula { margin: 5px 4px 0 5px; height: 26px; display: flex; gap: 8px; flex: none; color: #666; }
.namebox { width: 138px; background: #fafafa; box-shadow: 0 1px 1px #e4e4e4; display: flex; align-items: center; justify-content: space-between; padding: 0 5px 0 4px; font-size: 13px; }
.fxbox { width: 99px; background: #fafafa; box-shadow: 0 1px 1px #e4e4e4; display: flex; align-items: center; gap: 15px; padding-left: 8px; }
.fxbox i { font-family: "Liberation Serif", serif; font-size: 16px; color: #555; }
.fxinput { flex: 1; margin-left: -2px; background: #fff; box-shadow: 0 1px 1px #e4e4e4; display: flex; align-items: center; justify-content: flex-end; padding-right: 0; }

/* sheet */
.sheet { position: relative; margin-top: 11px; flex: 1; display: flex; min-height: 0; overflow: hidden; background: #fff; }
.grid { table-layout: fixed; border-collapse: separate; border-spacing: 0; width: 2132px; flex: none; font-family: "Lato", sans-serif; font-size: 27px; line-height: 30px; color: #111; }
.c-rh { width: 40px; } .c-a { width: 17px; } .c-b { width: 82px; } .c-c { width: 208px; } .c-d { width: 128px; } .c-e { width: 69.500px; } .c-f { width: 154px; } .c-g { width: 121px; } .c-h { width: 119.500px; } .c-i { width: 144px; } .c-j { width: 104px; } .c-k { width: 154px; } .c-l { width: 138px; } .c-m { width: 144px; } .c-n { width: 180px; } .c-o { width: 122px; } .c-p { width: 206.500px; }
thead th { height: 19px; padding: 0 0 0 2px; background: #f3f3f3; color: #666; font: 400 13px "Open Sans", sans-serif; border-right: 1.500px solid #e0e0e0; border-bottom: 2px solid #bdbdbd; }
thead th.sel { background: #c6e6d3; color: #2f6b4a; border-bottom-color: #3f7f5c; }
thead th.corner { position: relative; }
thead th.ph { padding-left: 48px; }
.corner span { position: absolute; right: 2px; top: 1px; width: 0; height: 0; border-style: solid; border-width: 0 0 15px 15px; border-color: transparent transparent #c9c9c9 transparent; }
tbody th { padding: 0 0 0 2px; background: #f3f3f3; color: #666; font: 400 13px "Open Sans", sans-serif; border-right: 2px solid #d0d0d0; border-bottom: 1px solid #e4e4e4; text-align: center; }
.r-a { height: 59.700px; }
.r-b { height: 54.400px; }
td { padding: 0 4px 2px 5px; vertical-align: bottom; white-space: nowrap; border-right: 1.500px solid #e6e6e6; border-bottom: 2px solid #e6e6e6; }
td.n { text-align: right; -webkit-text-stroke: .5px #111; }
td.t { letter-spacing: .3px; color: #222; -webkit-text-stroke: .15px #222; }
td.k { letter-spacing: .3px; -webkit-text-stroke: .5px #111; }
td.cap { letter-spacing: -.4px; }
td.nar { letter-spacing: 0; }
td.nar2 { letter-spacing: -.05px; }
td.dt { letter-spacing: -.3px; }
td.m { padding-right: 8px; }
td.nb2 { padding-right: 2px; }
td.ind { padding-left: 19px; }
.hl td:nth-of-type(n+3) { background: #ffff33; border-color: #ffff33; }
.or td:nth-of-type(n+3) { background: #fdb927; border-color: #fdb927; }
td.red { color: #c00d0d; -webkit-text-stroke-color: #c00d0d; }
.acct div { display: flex; justify-content: space-between; padding: 0 9px 0 8px; }
.acct.a2 div { padding-right: 6px; }
.acct { -webkit-text-stroke: .15px #222; color: #222; }
.hl td.tot-a:nth-of-type(n+3) { border-bottom: 3px solid #777; }
td.tot-b { border-bottom: 3px solid #666; }
td.risk { font-family: "Liberation Sans", sans-serif; font-size: 29.500px; letter-spacing: 0; -webkit-text-stroke: .2px #111; }
td.err { font-family: "Liberation Serif", serif; font-size: 30px; text-align: center; padding: 0 0 3px; -webkit-text-stroke: .3px #222; }
td.hash { font-family: "Liberation Serif", serif; font-size: 28px; padding: 0 0 2px 6px; overflow: hidden; letter-spacing: 1px; -webkit-text-stroke: .5px #111; }
td.h2 { padding-left: 3px; }
.tri { position: relative; }
.tri::before { content: ""; position: absolute; left: 0; top: 0; border-style: solid; border-width: 10px 10px 0 0; border-color: #3f7f22 transparent transparent transparent; }
.vscroll { flex: 1; background: #eee; padding: 20px 1px 0; display: flex; flex-direction: column; gap: 3px; }
.vs-btn { height: 18px; background: #fff; border: 1px solid #ccc; }
.vs-thumb { height: 50px; background: #ddd; }
.cursor { position: absolute; left: 503px; top: 113px; }
.paste-tag { position: absolute; left: 1916px; top: 1087px; }
```
